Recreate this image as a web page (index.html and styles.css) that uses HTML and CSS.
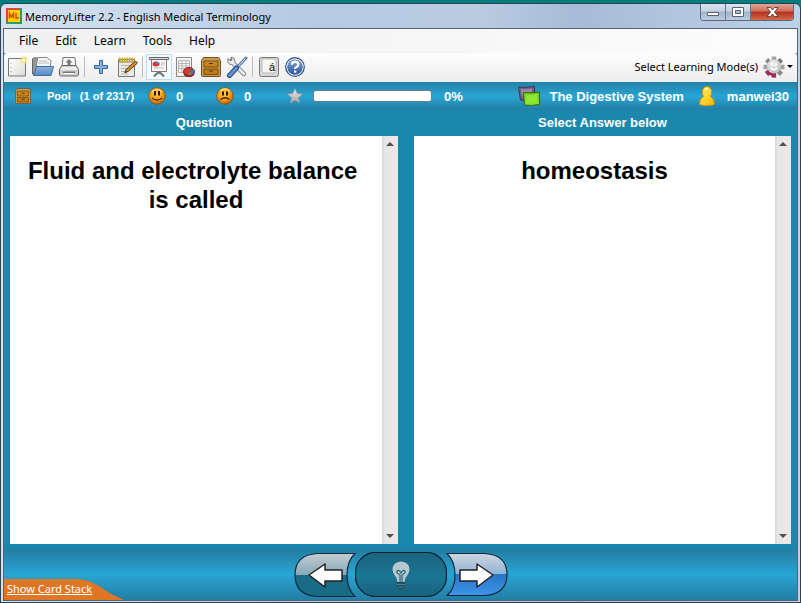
FILE: index.html
```html
<!DOCTYPE html>
<html lang="en">
<head>
<meta charset="utf-8">
<title>MemoryLifter 2.2 - English Medical Terminology</title>
<link rel="stylesheet" href="styles.css">
</head>
<body>
<svg class="defs" width="0" height="0" aria-hidden="true">
  <defs>
    <linearGradient id="paper" x1="0" y1="0" x2="1" y2="1"><stop offset="0" stop-color="#fff"/><stop offset="1" stop-color="#dcdcda"/></linearGradient>
    <linearGradient id="wood" x1="0" y1="0" x2="0" y2="1"><stop offset="0" stop-color="#d08a20"/><stop offset="1" stop-color="#bb760f"/></linearGradient>
    <linearGradient id="steel" x1="0" y1="0" x2="0" y2="1"><stop offset="0" stop-color="#8eb2dc"/><stop offset="1" stop-color="#5688c4"/></linearGradient>
    <radialGradient id="face" cx=".45" cy=".35" r=".65"><stop offset="0" stop-color="#ffcf48"/><stop offset=".6" stop-color="#f69a12"/><stop offset="1" stop-color="#b95e08"/></radialGradient>
    <linearGradient id="star" x1="0" y1="0" x2="0" y2="1"><stop offset="0" stop-color="#eee"/><stop offset="1" stop-color="#a5a5a5"/></linearGradient>
    <linearGradient id="help" x1="0" y1="0" x2="0" y2="1"><stop offset="0" stop-color="#86a5d6"/><stop offset="1" stop-color="#29539b"/></linearGradient>
    <linearGradient id="green" x1="0" y1="0" x2="0" y2="1"><stop offset="0" stop-color="#72c816"/><stop offset="1" stop-color="#8bea32"/></linearGradient>
    <linearGradient id="gold" x1="0" y1="0" x2="1" y2="1"><stop offset="0" stop-color="#fff36a"/><stop offset="1" stop-color="#f6b800"/></linearGradient>
    <radialGradient id="silver" cx=".4" cy=".3" r=".8"><stop offset="0" stop-color="#f2f2f2"/><stop offset="1" stop-color="#b8b8b8"/></radialGradient>
    <linearGradient id="back" x1="0" y1="0" x2="0" y2="1"><stop offset="0" stop-color="#c4ccd0"/><stop offset=".5" stop-color="#85a9b7"/><stop offset=".5" stop-color="#1a6c88"/><stop offset="1" stop-color="#196a85"/></linearGradient>
    <linearGradient id="next" x1="0" y1="0" x2="0" y2="1"><stop offset="0" stop-color="#ced6e0"/><stop offset=".5" stop-color="#8fb2d4"/><stop offset=".5" stop-color="#2875c4"/><stop offset="1" stop-color="#3e95ec"/></linearGradient>
    <linearGradient id="hint" x1="0" y1="0" x2="0" y2="1"><stop offset="0" stop-color="#1b637d"/><stop offset=".55" stop-color="#1b7594"/><stop offset="1" stop-color="#18617b"/></linearGradient>
    <symbol id="drawer" viewBox="0 0 20 20">
      <path d="M2.500.5h15l2 3v15a1 1 0 0 1-1 1h-17a1 1 0 0 1-1-1v-15z" fill="#c69a55" stroke="#6b5229"/>
      <path d="M3 4h14v6H3zM3 12h14v5.500H3z" fill="url(#wood)" stroke="#7d5112"/>
      <path d="M8 6.500h4M8 14h4" fill="none" stroke="#5b3407"/>
    </symbol>
    <symbol id="happy" viewBox="0 0 18 18">
      <circle cx="9" cy="9" r="8.300" fill="url(#face)" stroke="#8f4a0b" stroke-width=".8"/>
      <path d="M4 5q5-5 10 0" fill="none" stroke="#ffe07a" stroke-width="1.500"/>
      <path d="M7 4v4.500M11 4v4.500" stroke="#2c1603" stroke-width="2"/>
      <path d="M4 11q5 4 10 0" fill="none" stroke="#4c2504" stroke-width="1.300"/>
    </symbol>
    <symbol id="sad" viewBox="0 0 18 18">
      <circle cx="9" cy="9" r="8.300" fill="url(#face)" stroke="#8f4a0b" stroke-width=".8"/>
      <path d="M4 4q5-4 10 0" fill="none" stroke="#ffe07a" stroke-width="1.500"/>
      <path d="M7 4.500v4M11 4.500v4" stroke="#2c1603" stroke-width="2"/>
      <path d="M4.500 12.500q4.500-3.500 9 0" fill="none" stroke="#4c2504" stroke-width="1.300"/>
    </symbol>
  </defs>
</svg>
<div class="window">
  <header class="titlebar">
    <svg class="logo" width="16" height="16" viewBox="0 0 16 16" aria-hidden="true"><path fill="#2fa04c" d="M0 0h16v16H0z"/><path fill="#e1442a" d="M0 0h14L0 14z"/><path fill="#f9d400" d="M2 2h12v12H2z"/><path d="M3.500 10.500V5.500L5.500 9l2-3.500v5M10 5v5h3" fill="none" stroke="#d8430e" stroke-width="1.400"/></svg>
    <h1>MemoryLifter 2.2 - English Medical Terminology</h1>
    <div class="caption">
      <button class="cap min" aria-label="Minimize"><svg width="14" height="12" viewBox="0 0 14 12"><path d="M1.500 6.500h11v3h-11z" fill="#fff" stroke="#5a6273"/></svg></button>
      <button class="cap max" aria-label="Maximize"><svg width="12" height="12" viewBox="0 0 12 12"><path d="M.5 1.500h11v9H.5zM3.500 4.500h5v3h-5z" fill="#fff" fill-rule="evenodd" stroke="#5a6273"/></svg></button>
      <button class="cap close" aria-label="Close"><svg width="13" height="12" viewBox="0 0 13 12"><path d="M1 1.500h3.500l2 2.500 2-2.500H12L8.500 6l3.500 4.500H8.500l-2-2.500-2 2.500H1L4.500 6z" fill="#fff" stroke="#5c3a45" stroke-width=".9"/></svg></button>
    </div>
  </header>
  <div class="client">
    <nav class="menubar">
      <button>File</button><button>Edit</button><button>Learn</button><button>Tools</button><button>Help</button>
    </nav>
    <div class="toolbar">
      <button aria-label="New"><svg width="20" height="22" viewBox="0 0 20 22"><path d="M1.500 2.500h17v17.500h-17z" fill="url(#paper)" stroke="#777"/><path d="M4 7v1M4 11v1M4 15v1" stroke="#aaa"/><circle cx="17" cy="4" r="3.500" fill="#f5e35b" opacity=".75"/><circle cx="17" cy="4" r="1.600" fill="#fff"/></svg></button>
      <button aria-label="Open"><svg width="24" height="22" viewBox="0 0 24 22"><path d="M1.500 18V3l1-1h5l1 2h9v14z" fill="#979797" stroke="#666"/><path d="M5 10l2-8.500h9l4 3.500-1 7z" fill="#f5f5f5" stroke="#888"/><path d="M8 5h8M7 7h11" stroke="#bbb"/><path d="M2.500 19.500l3-9h17l-2.500 9z" fill="url(#steel)" stroke="#3d6dab"/></svg></button>
      <button aria-label="Print"><svg width="22" height="22" viewBox="0 0 22 22"><path d="M5 1.500h12l1 9H4z" fill="#f4f4f4" stroke="#777"/><path d="M11 3l3.500 3.500h-2V9h-3V6.500h-2z" fill="#777"/><path d="M4 9.500h14l2.500 4v5.500l-1 1h-17l-1-1v-5.500z" fill="#cfcfcf" stroke="#666"/><path d="M4 11h14l1.500 3h-17z" fill="#ececec"/><path d="M5 16.500h12" stroke="#777" stroke-width="2"/><path d="M5.500 17.500h11" stroke="#fff"/></svg></button>
      <span class="sep"></span>
      <button aria-label="Add card"><svg width="16" height="16" viewBox="0 0 16 16"><path d="M6.500 1.500h3v5h5v3h-5v5h-3v-5h-5v-3h5z" fill="#86afdc" stroke="#3465a4"/></svg></button>
      <button aria-label="Edit card"><svg width="22" height="22" viewBox="0 0 22 22"><path d="M2.500 3.500h16v17h-16z" fill="#e9e9e6" stroke="#777"/><path d="M3 3.500h15.500" stroke="#d0a712" stroke-width="4" stroke-dasharray="1.500 1"/><path d="M3 6h15" stroke="#a07c20"/><path d="M5 9.500h10M5 12.500h8M5 15.500h7M5 18h7" stroke="#b6b6b4"/><path d="M9 16.500l1-3L19.500 5l2 2-9.500 8.500z" fill="#d58c2c" stroke="#593a12"/><path d="M8.500 17l2-.5-1.500-1.500z" fill="#222"/></svg></button>
      <span class="sep"></span>
      <button class="active" aria-label="Slide show"><svg width="22" height="22" viewBox="0 0 22 22"><path d="M11 14v4M11 15.500l-5 5M11 15.500l5 5" stroke="#777" stroke-width="2.200"/><path d="M3.500 3.500h15v12h-15z" fill="#f6f6f6" stroke="#7c7c7c"/><path d="M1.500 1.500h19v2h-19z" fill="#ddd" stroke="#666"/><ellipse cx="8" cy="8" rx="3.500" ry="2.500" fill="#d83636"/><path d="M8 8V5.500q3.500 0 3.500 2.500z" fill="#5c7eb2"/><path d="M13 7h4M13 9h3M6 12h10" stroke="#bbb"/></svg></button>
      <button aria-label="Statistics"><svg width="22" height="22" viewBox="0 0 22 22"><path d="M2.500 1.500h15v19h-15z" fill="#f5f5f4" stroke="#888"/><path d="M4.500 4.500h11v12h-11zM4.500 7.500h11M4.500 10h11M4.500 12.500h11M8 4.500v12M12 4.500v12" fill="none" stroke="#b8b8b8"/><path d="M9.500 15v2.500c0 2 2.500 3.500 5.500 3.500s5.500-1.500 5.500-3.500V15z" fill="#9b2020"/><ellipse cx="15" cy="15.500" rx="5.500" ry="4" fill="#d23a35" stroke="#8d2020"/><path d="M15 15.500l4-2.500q3 2 0 5z" fill="#4674ac"/><path d="M15 15.500l3 3-3 .8z" fill="#58a045"/></svg></button>
      <button aria-label="Card boxes"><svg width="20" height="20"><use href="#drawer"/></svg></button>
      <button aria-label="Options"><svg width="22" height="22" viewBox="0 0 22 22"><path d="M5 5l13 13" stroke="#777" stroke-width="4.500" stroke-linecap="round"/><path d="M2 2.500l2.500 2.500 1.500-1L5 1q4 .5 4 4.500-1 3-4.500 3Q1 7.500 2 2.500z" fill="#eee" stroke="#777"/><path d="M6 6l12 12" stroke="#ededed" stroke-width="2.800" stroke-linecap="round"/><path d="M20 2l-8.500 9" stroke="#567ba8" stroke-width="3" stroke-linecap="round"/><path d="M19.500 2.500L12 10.500" stroke="#dce5ef"/><path d="M10.500 12l-7 7.500" stroke="#204a87" stroke-width="5" stroke-linecap="round"/><path d="M10.500 12l-7 7.500" stroke="#6692cc" stroke-width="3" stroke-linecap="round"/></svg></button>
      <span class="sep"></span>
      <button aria-label="Character map"><svg width="20" height="20" viewBox="0 0 20 20"><rect x=".5" y=".5" width="19" height="19" rx="2" fill="#d7d7d3" stroke="#777"/><rect x="3" y="2" width="14" height="14" rx="2" fill="#f6f6f2" stroke="#bbb"/><text x="10" y="14" class="key">á</text></svg></button>
      <button aria-label="Help"><svg width="20" height="20" viewBox="0 0 20 20"><circle cx="10" cy="10" r="9.300" fill="#f6f8fc" stroke="#304f83" stroke-width="1.200"/><circle cx="10" cy="10" r="7.800" fill="url(#help)"/><path d="M6.800 7.800q0-3 3.300-3 3.300 0 3.300 2.700 0 1.700-2 2.500-1.200.5-1.200 2" fill="none" stroke="#fff" stroke-width="2.200"/><path d="M9 13.500h2.400v2.200H9z" fill="#fff"/></svg></button>
      <button class="mode">Select Learning Mode(s)
        <svg width="22" height="22" viewBox="0 0 22 22"><g stroke="#a2a2a2" stroke-width="4.500"><path d="M11 .5v21M.5 11h21"/><path d="M3.600 3.600l14.800 14.800" stroke="#8a8a8a"/><path d="M18.400 3.600L3.600 18.400" stroke="#777"/></g><path d="M11 11L2 15.500l3 4 3-.5 1 2.500h4V18z" fill="#a9215f"/><circle cx="11" cy="10.500" r="7" fill="url(#silver)"/><path d="M9 7.500V10M13 7.500V10M7.500 12q3.500 3.500 7 0" fill="none" stroke="#fff" stroke-width="1.500"/></svg>
        <span class="caret"></span>
      </button>
    </div>
    <div class="status">
      <svg width="16" height="16" aria-hidden="true"><use href="#drawer"/></svg>
      <span class="pool"><b>Pool</b><b>(1 of 2317)</b></span>
      <svg width="18" height="18" aria-label="Correct"><use href="#happy"/></svg>
      <span class="count">0</span>
      <svg width="18" height="18" aria-label="Wrong"><use href="#sad"/></svg>
      <span class="count">0</span>
      <svg width="16" height="16" viewBox="0 0 16 16" aria-hidden="true"><path d="M8 .5l2.200 5 5.300.5-4 3.600 1.200 5.400L8 12.200 3.300 15l1.200-5.400L.5 6l5.300-.5z" fill="url(#star)" stroke="#999" stroke-width=".7"/></svg>
      <div class="progress" role="progressbar" aria-label="Score" aria-valuenow="0"></div>
      <span>0%</span>
      <div class="session">
        <svg width="22" height="20" viewBox="0 0 22 20" aria-hidden="true"><path d="M.5 1q7 1 16-.5v13q-7 1.500-14 .5z" fill="#775f82" stroke="#3c3651"/><path d="M3 3q6 .5 11-.5v4L4 10z" fill="#9c87a5"/><path d="M5.500 6.500q8 1 16-.5v12.500q-8 1.500-15 .5z" fill="url(#green)" stroke="#326a0b"/><path d="M8 8.500q6 .5 11-.5v8q-6 1-10.500 0z" fill="#8ee735"/></svg>
        <span>The Digestive System</span>
        <svg class="user" width="16" height="20" viewBox="0 0 16 20" aria-hidden="true"><path d="M4.500 10.500Q3 8 3.500 4.500 4.500.5 8 .5t4.500 4Q13 8 11.500 10.500q4 2 4 7.500-1 1.500-7.500 1.500T.5 18q0-5.500 4-7.500z" fill="url(#gold)" stroke="#d69300"/><path d="M6 4q1-2 3-1.500" fill="none" stroke="#fffde0" stroke-width="1.500"/></svg>
        <span>manwei30</span>
      </div>
    </div>
    <main class="cards">
      <section class="card">
        <h2>Question</h2>
        <div class="pane">
          <p>Fluid and electrolyte balance&nbsp;<br>is called</p>
          <div class="scroll"><button class="up" aria-label="Scroll question up"></button><button class="down" aria-label="Scroll question down"></button></div>
        </div>
      </section>
      <section class="card">
        <h2>Select Answer below</h2>
        <div class="pane">
          <p>homeostasis</p>
          <div class="scroll"><button class="up" aria-label="Scroll answer up"></button><button class="down" aria-label="Scroll answer down"></button></div>
        </div>
      </section>
    </main>
    <footer class="controls">
      <a class="stack" href="#stack">Show Card Stack</a>
      <div class="answer">
        <button aria-label="Previous"><svg width="62" height="46" viewBox="0 0 62 46"><path d="M23 1.500h38Q53 9 53 23t8 21.500H23Q1 43 1 23T23 1.500z" fill="url(#back)" stroke="#092b3b" stroke-width="1.200"/><path d="M15 23L31 12v6h17v11H31v6z" fill="#fff" stroke="#222" stroke-width="1.500" stroke-linejoin="round"/></svg></button>
        <button aria-label="Hint"><svg width="92" height="46" viewBox="0 0 92 46"><rect x=".5" y=".5" width="91" height="44" rx="20" fill="url(#hint)" stroke="#06222f" stroke-width="1.200"/><path d="M42.500 30q0-4-3-7-2-3-2-6 .5-7 8.500-7.500 8 .5 8.500 7.500 0 3-2 6-3 3-3 7z" fill="#b7c9d0"/><path d="M45 30v-7q-4-2-3-4 2-2 4 2 2-4 4-2 1 2-3 4v7" fill="none" stroke="#2b6178" stroke-width="1.200"/><path d="M42 30h8v5l-2 2.500h-4L42 35z" fill="#234e60"/><path d="M42 32.500h8M43 35h6" stroke="#557d8f"/></svg></button>
        <button aria-label="Next"><svg width="62" height="46" viewBox="0 0 62 46"><path d="M39 1.500H1Q9 9 9 23T1 43.500h38Q61 42 61 22.500T39 1.500z" fill="url(#next)" stroke="#092b3b" stroke-width="1.200"/><path d="M47 23L31 12v6H14v11h17v6z" fill="#fff" stroke="#222" stroke-width="1.500" stroke-linejoin="round"/></svg></button>
      </div>
    </footer>
  </div>
</div>
</body>
</html>
```
FILE: styles.css
```css
* { box-sizing: border-box; }

html { height: 100%; }

body {
  margin: 0;
  height: 100%;
  padding-top: 3px;
  background: #007c7c;
  font-family: "Noto Sans", "Open Sans", sans-serif;
  font-size: 12px;
  color: #000;
}

button {
  padding: 0;
  border: 0;
  background: none;
  font: inherit;
  color: inherit;
}

svg { display: block; flex: none; }

.defs { position: absolute; }

.window {
  height: 100%;
  display: flex;
  flex-direction: column;
  padding: 0 2px 1px;
  border: 1px solid #2c4356;
  border-radius: 6px 6px 0 0;
  background: linear-gradient(90deg, #d5e2ee, #b5cbe3 38%, #b9cbe1 60%, #a6bcd6 72%, #bdd1e8);
}

.titlebar {
  height: 24px;
  flex: none;
  display: flex;
  align-items: center;
  padding-left: 3px;
}

.titlebar h1 {
  flex: 1;
  margin: 0;
  padding-left: 3px;
  font-size: 11px;
  font-weight: 400;
}

.caption {
  display: flex;
  align-self: flex-start;
  height: 17px;
  margin-right: 4px;
  border: 1px solid #586a80;
  border-top: 0;
  border-radius: 0 0 4px 4px;
  overflow: hidden;
}

.cap {
  width: 25px;
  display: grid;
  place-items: center;
  border-right: 1px solid #66788f;
  background: linear-gradient(#dce6f0, #c3d1e0 45%, #a2b4c9 50%, #bccde0);
}

.cap.close {
  width: 42px;
  border-right: 0;
  background: linear-gradient(#e2a594, #ce6d58 45%, #b33020 50%, #d36b45);
}

.client {
  flex: 1;
  display: flex;
  flex-direction: column;
  min-height: 0;
  border: 1px solid #536478;
  background: #1c87ac;
}

.menubar {
  height: 24px;
  flex: none;
  display: flex;
  align-items: center;
  gap: 17px;
  padding: 0 0 2px 15px;
  background: linear-gradient(90deg, #f0f0f0, #fcfcfc);
}

.toolbar {
  height: 29px;
  flex: none;
  display: flex;
  align-items: center;
  padding-bottom: 2px;
  background: linear-gradient(#fdfdfd, #ededed);
  border-radius: 3px 3px 0 0;
}

.toolbar button {
  width: 26px;
  height: 26px;
  display: grid;
  place-items: center;
}

.toolbar .active { border: 1px solid #b5dff5; background: #f4fafd; }

.toolbar .mode {
  width: auto;
  display: flex;
  align-items: center;
  gap: 5px;
  margin-left: auto;
  padding-right: 4px;
  font-size: 11px;
}

.sep {
  width: 6px;
  height: 20px;
  border-left: 2px solid transparent;
  background: linear-gradient(90deg, #bbb 1px, transparent 1px) content-box;
}

.key { font: 11px "Liberation Sans", sans-serif; }

.caret {
  border: 3px solid transparent;
  border-top-color: #000;
  border-bottom: 0;
  margin-left: -3px;
}

.status {
  height: 28px;
  flex: none;
  display: grid;
  grid-template-columns: 31px 102px 28px 40px 28px 43px 26px 119px 30px 1fr;
  align-items: center;
  padding: 0 8px 0 11px;
  background: linear-gradient(#2380a6, #29a5d3 50%, #237ea4);
  font: bold 13px "Liberation Sans", sans-serif;
  color: #fff;
}

.pool { display: flex; gap: 9px; padding-left: 1px; font-size: 11px; }

.progress {
  height: 12px;
  border: 1px solid #6d7c86;
  border-radius: 3px;
  background: #fff;
}

.progress + span { padding-left: 12px; }

.session {
  display: flex;
  align-items: center;
  justify-content: flex-end;
  gap: 9px;
}

.user { margin: 0 3px 0 6px; }

.cards {
  flex: 1;
  min-height: 0;
  display: grid;
  grid-template-columns: 388fr 377fr;
  gap: 16px;
  padding: 0 6px 5px;
}

.card { display: flex; flex-direction: column; }

.card h2 {
  margin: 0;
  height: 26px;
  font: bold 13px/25px "Liberation Sans", sans-serif;
  text-align: center;
  color: #fff;
}

.pane {
  flex: 1;
  display: flex;
  background: #fff;
}

.pane p {
  flex: 1;
  margin: 0;
  padding: 20px 10px;
  font: bold 24px/29px "Liberation Sans", sans-serif;
  text-align: center;
}

.scroll {
  width: 16px;
  display: flex;
  flex-direction: column;
  justify-content: space-between;
  background: linear-gradient(90deg, #d6d6d6, #e6e6e6 3px, #eaeaea);
}

.scroll button { height: 16px; display: grid; place-items: center; }

.scroll button::before {
  content: "";
  border: 4px solid transparent;
}

.scroll .up::before { border-top: 0; border-bottom-color: #505050; }
.scroll .down::before { border-bottom: 0; border-top-color: #505050; }

.controls {
  height: 51px;
  flex: none;
  display: grid;
  grid-template-columns: 1fr auto 1fr;
  background: linear-gradient(#237da3, #29a5d3 50%, #237da3);
}

.stack {
  align-self: end;
  justify-self: start;
  width: 120px;
  height: 21px;
  padding-left: 3px;
  background: #df7624;
  clip-path: polygon(0 0, 75px 0, 85px 2px, 95px 7px, 107px 15px, 120px 21px, 0 21px);
  font-size: 11px;
  line-height: 20px;
  color: #fff;
}

.answer { display: flex; align-items: center; }
.answer button + button { margin-left: -1px; }
```
